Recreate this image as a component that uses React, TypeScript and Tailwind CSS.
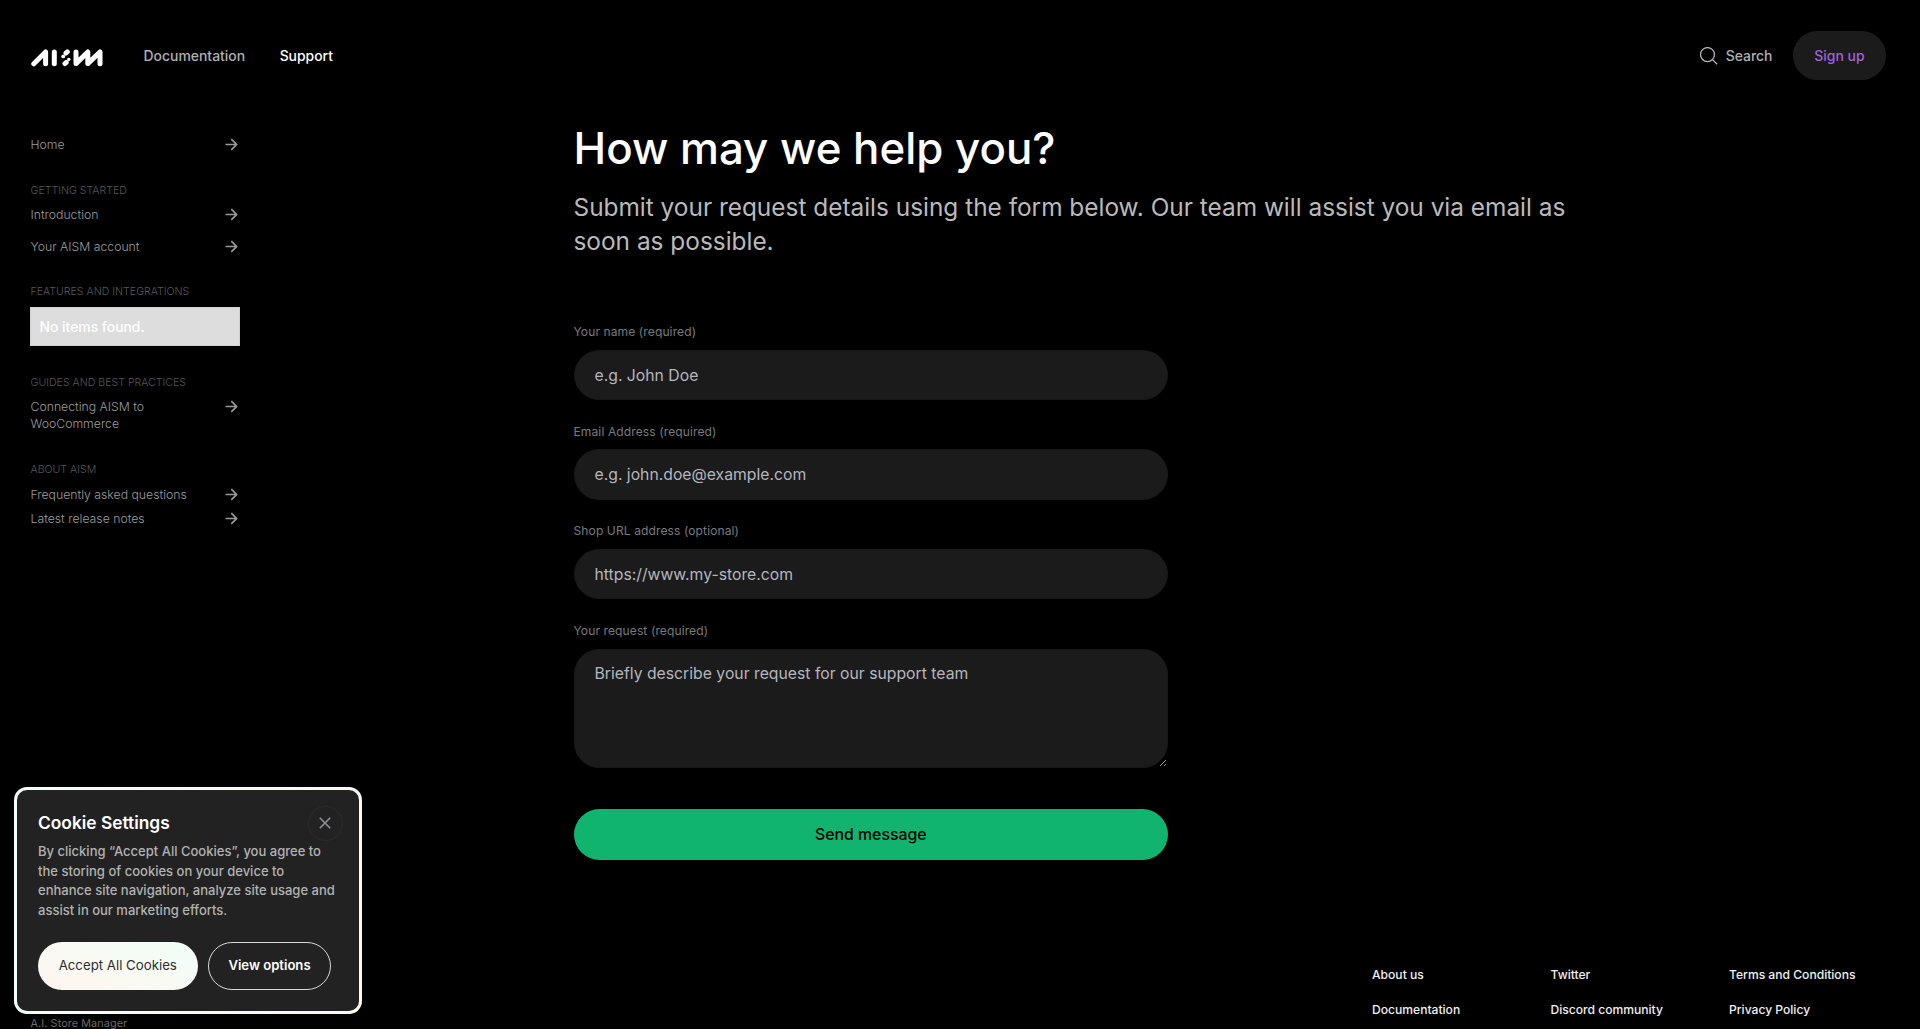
import type { ReactNode } from "react";

function Logo() {
  return (
    <svg width="73" height="18" viewBox="0 0 73 18" fill="none" stroke="#fff" strokeWidth="5" strokeLinecap="round" strokeLinejoin="round">
      <path d="M2.8 14.8L14.6 3V14.8" />
      <path d="M23.3 3V14.8" />
      <path d="M34.9 4.1L36.3 2.9M33.9 14.6L35.3 13.4" strokeWidth="4.8" />
      <circle cx="32.2" cy="7.4" r="1.9" fill="#fff" stroke="none" />
      <circle cx="37.8" cy="10.4" r="1.7" fill="#fff" stroke="none" />
      <path d="M45 3V14.6L56.8 3V14.6L69 3V14.8" />
    </svg>
  );
}

function Arrow() {
  return (
    <svg className="shrink-0" width="13" height="13" viewBox="0 0 13 13" fill="none" stroke="#999" strokeWidth="1.7">
      <path d="M0.5 6.5H11.3M6.3 1.2L11.6 6.5L6.3 11.8" />
    </svg>
  );
}

function NavLink({ children, className }: { children: ReactNode; className: string }) {
  return (
    <a className={`flex justify-between pr-[3px] text-[12.25px] leading-[17px] font-light text-[#9c9c9c] ${className}`}>
      <span className="w-[150px] whitespace-nowrap">{children}</span>
      <span className="flex h-[17px] items-center">
        <Arrow />
      </span>
    </a>
  );
}

function NavHeading({ children }: { children: ReactNode }) {
  return <h2 className="h-[14px] text-[10.6px] leading-[14px] font-light whitespace-nowrap text-[#54575c]">{children}</h2>;
}

function Field({ label, placeholder }: { label: string; placeholder: string }) {
  return (
    <label className="block h-[99.6px]">
      <span className="block h-[26.5px] text-[12.05px] leading-[17px] tracking-[0.1px] text-[#777a7f]">{label}</span>
      <input
        className="block h-[50.5px] w-full rounded-[25px] border border-[#181818] bg-[#1b1b1b] px-[20px] text-[15.75px] text-white placeholder:text-[#b4b6bf] placeholder:opacity-100"
        placeholder={placeholder}
      />
    </label>
  );
}

export default function App() {
  return (
    <div className="relative h-[1029px] w-[1920px] overflow-hidden bg-black font-['Inter',sans-serif] text-white">
      <header className="flex h-[111px] items-center justify-between pr-[34px] pl-[30.5px]">
        <div className="flex items-center">
          <div className="mt-[5px]">
            <Logo />
          </div>
          <a className="ml-[40px] pt-[2px] text-[13.95px] font-[450] text-[#b0b0b0]">Documentation</a>
          <a className="ml-[34.5px] pt-[2px] text-[13.9px] font-medium">Support</a>
        </div>
        <div className="flex items-center">
          <svg width="18" height="18" viewBox="0 0 18 18" fill="none" stroke="#b5b5b5" strokeWidth="1.3">
            <circle cx="7.5" cy="7.6" r="7" />
            <path d="M12.5 12.6L17.1 17.2" />
          </svg>
          <a className="ml-[8px] pt-[2px] text-[13.95px] font-[450] text-[#b0b0b0]">Search</a>
          <a className="ml-[20.5px] flex h-[49px] w-[93px] items-center justify-center rounded-full bg-[#1b1b1b] pt-[2px] text-[13.95px] font-[450] text-[#a562d6]">Sign up</a>
        </div>
      </header>

      <div className="flex">
        <aside className="w-[240.5px] pt-[24.5px] pl-[30.5px]">
          <NavLink className="h-[48.5px]">Home</NavLink>
          <NavHeading>GETTING STARTED</NavHeading>
          <NavLink className="mt-[8px] h-[32px]">Introduction</NavLink>
          <NavLink className="h-[47px]">Your AISM account</NavLink>
          <NavHeading>FEATURES AND INTEGRATIONS</NavHeading>
          <div className="mt-[8px] -ml-[0.5px] flex h-[39px] w-[210px] items-center border border-[#d0d0d0] bg-[#ddd] pt-[1px] pl-[8.5px] text-[13.9px] font-[450] text-white">No items found.</div>
          <div className="h-[30px]" />
          <NavHeading>GUIDES AND BEST PRACTICES</NavHeading>
          <NavLink className="mt-[8px] h-[64.7px]">
            Connecting AISM to
            <br />
            WooCommerce
          </NavLink>
          <NavHeading>ABOUT AISM</NavHeading>
          <NavLink className="mt-[9.3px] h-[24.5px]">Frequently asked questions</NavLink>
          <NavLink className="h-[24px]">Latest release notes</NavLink>
        </aside>

        <main className="ml-[333px] w-[1010px] pt-[11px]">
          <h1 className="h-[68px] text-[43.85px] leading-[54px] font-medium">How may we help you?</h1>
          <p className="h-[133.3px] text-[24.4px] leading-[34px] text-[#bababa]">
            Submit your request details using the form below. Our team will assist you via email as
            <br />
            soon as possible.
          </p>
          <form className="w-[594.5px]">
            <Field label="Your name (required)" placeholder="e.g. John Doe" />
            <Field label="Email Address (required)" placeholder="e.g. john.doe@example.com" />
            <Field label="Shop URL address (optional)" placeholder="https://www.my-store.com" />
            <label className="block">
              <span className="block h-[26.5px] text-[12.05px] leading-[17px] tracking-[0.1px] text-[#777a7f]">Your request (required)</span>
              <textarea
                className="block h-[119px] w-full rounded-[25px] border border-[#181818] bg-[#1b1b1b] px-[20px] py-[14px] text-[15.75px] leading-[20px] text-white placeholder:text-[#b4b6bf] placeholder:opacity-100"
                placeholder="Briefly describe your request for our support team"
              />
            </label>
            <button type="button" className="mt-[41.5px] block h-[51px] w-full rounded-full bg-[#11b46e] text-[15.85px] font-medium text-black">
              Send message
            </button>
          </form>
        </main>
      </div>

      <footer className="absolute right-0 bottom-0 left-0 flex h-[65px] justify-between pl-[30.5px]">
        <div className="mt-[52px] text-[10.8px] leading-[15px] tracking-[0.1px] text-[#777]">A.I. Store Manager</div>
        <div className="mr-[5px] grid grid-cols-[178.5px_178.5px_186px] grid-rows-[35px_35px] text-[12.1px] leading-[21px] font-medium whitespace-nowrap text-[#f0f0f0]">
          <a>About us</a>
          <a>Twitter</a>
          <a>Terms and Conditions</a>
          <a>Documentation</a>
          <a>Discord community</a>
          <a>Privacy Policy</a>
        </div>
      </footer>

      <section className="absolute top-[787px] left-[14px] h-[226.5px] w-[348px] rounded-[13px] bg-linear-to-r from-[#f1fff8] to-[#fff8f1] p-[3px] shadow-[0_0_20px_rgba(0,0,0,0.6)]">
        <div className="relative h-full rounded-[10px] bg-[#222] pt-[22px] pl-[21px]">
          <button type="button" className="absolute top-[15.5px] right-[16.5px] flex size-[35px] items-center justify-center rounded-full border border-[#2b2b2b]">
            <svg width="12" height="12" viewBox="0 0 12 12" stroke="#919197" strokeWidth="1.6">
              <path d="M0.8 0.8L11.2 11.2M11.2 0.8L0.8 11.2" />
            </svg>
          </button>
          <h2 className="h-[30px] text-[17.35px] leading-[22px] font-semibold">Cookie Settings</h2>
          <p className="text-[13.02px] leading-[19.6px] font-[450] whitespace-nowrap text-[#b2b2b2]">
            By clicking “Accept All Cookies”, you agree to
            <br />
            the storing of cookies on your device to
            <br />
            enhance site navigation, analyze site usage and
            <br />
            assist in our marketing efforts.
          </p>
          <div className="mt-[21.5px] -ml-[0.5px] flex gap-[10px]">
            <button type="button" className="h-[48px] w-[160.5px] rounded-full bg-linear-to-tr from-[#fff5ef] to-[#f0fff8] text-[13.25px] text-[#2d2d2d]">
              Accept All Cookies
            </button>
            <button type="button" className="h-[48px] w-[123px] rounded-full border border-[#d8d8d8] text-[13.1px] font-semibold">
              View options
            </button>
          </div>
        </div>
      </section>
    </div>
  );
}
